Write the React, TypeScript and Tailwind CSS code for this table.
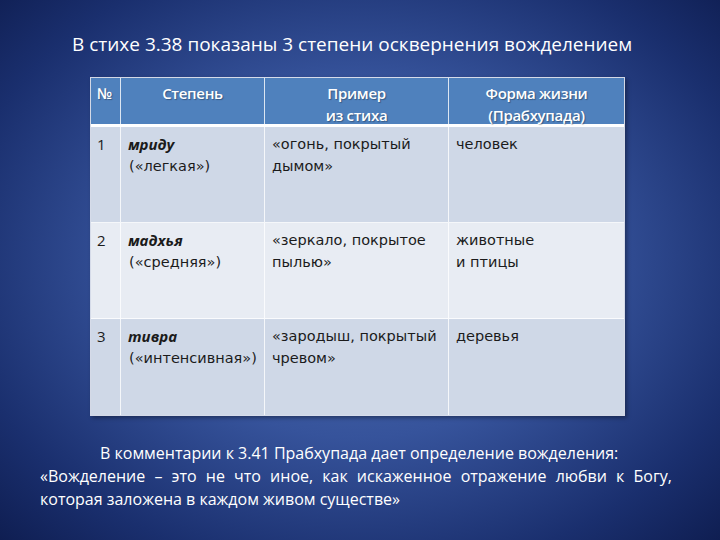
const rows = [
  { n: "1", term: "мриду", gloss: "(«легкая»)", example: ["«огонь, покрытый", "дымом»"], life: ["человек"], bg: "bg-[#cfd8e7]" },
  { n: "2", term: "мадхья", gloss: "(«средняя»)", example: ["«зеркало, покрытое", "пылью»"], life: ["животные", "и птицы"], bg: "bg-[#e8ecf3]" },
  { n: "3", term: "тивра", gloss: "(«интенсивная»)", example: ["«зародыш, покрытый", "чревом»"], life: ["деревья"], bg: "bg-[#cfd8e7]" },
];

export default function App() {
  return (
    <div className="w-[720px] h-[540px] overflow-hidden bg-[radial-gradient(ellipse_at_50%_48%,#5071b3_0%,#36539b_45%,#1a2f6e_80%,#0f1e52_100%)] font-['Liberation_Sans',sans-serif]">
      <h1 className="pt-[29px] pl-[72px] text-[19px] leading-[30px] text-white font-['Open_Sans',sans-serif] font-normal">
        В стихе 3.38 показаны 3 степени осквернения вожделением
      </h1>

      <div className="ml-[90px] mt-[18px] w-[535px] border border-white/80 shadow-[2px_2px_4px_rgba(0,0,0,0.35)]">
        <div className="grid grid-cols-[30px_144px_184px_175px] h-[49px] bg-[#4f81bd] border-b-[3px] border-white text-white text-[15px] leading-[22px] font-['Open_Sans',sans-serif] font-semibold tracking-[-0.3px] [text-shadow:1px_1px_1px_rgba(0,0,0,0.3)]">
          <div className="pl-[6px] pt-[4px] border-r border-white/80">№</div>
          <div className="pt-[4px] text-center border-r border-white/80">Степень</div>
          <div className="pt-[4px] text-center border-r border-white/80">
            <div>Пример</div>
            <div>из стиха</div>
          </div>
          <div className="pt-[4px] text-center">
            <div>Форма жизни</div>
            <div>(Прабхупада)</div>
          </div>
        </div>

        {rows.map((r, i) => (
          <div
            key={r.n}
            className={`grid grid-cols-[30px_144px_184px_175px] h-[96px] ${r.bg} ${i < 2 ? "border-b border-white/80" : ""} text-[14.5px] leading-[22px] text-[#1b1b1b] font-['DejaVu_Sans',sans-serif]`}
          >
            <div className="pl-[6px] pt-[6px] border-r border-white/80 font-['Open_Sans',sans-serif] text-[15px]">{r.n}</div>
            <div className="pl-[7px] pt-[6px] border-r border-white/80">
              <div className="font-bold italic font-['Open_Sans',sans-serif] text-[15px]">{r.term}</div>
              <div className="pl-[1px]">{r.gloss}</div>
            </div>
            <div className="pl-[7px] pt-[6px] border-r border-white/80">
              {r.example.map((t) => (
                <div key={t}>{t}</div>
              ))}
            </div>
            <div className="pl-[7px] pt-[6px]">
              {r.life.map((t) => (
                <div key={t}>{t}</div>
              ))}
            </div>
          </div>
        ))}
      </div>

      <div className="mt-[26px] px-[40px] w-[712px] text-white text-[16px] leading-[23px] font-['Open_Sans',sans-serif]">
        <p className="pl-[60px]">В комментарии к 3.41 Прабхупада дает определение вожделения:</p>
        <p className="text-justify [text-align-last:left]">
          «Вожделение – это не что иное, как искаженное отражение любви к Богу, которая заложена в каждом живом существе»
        </p>
      </div>
    </div>
  );
}
